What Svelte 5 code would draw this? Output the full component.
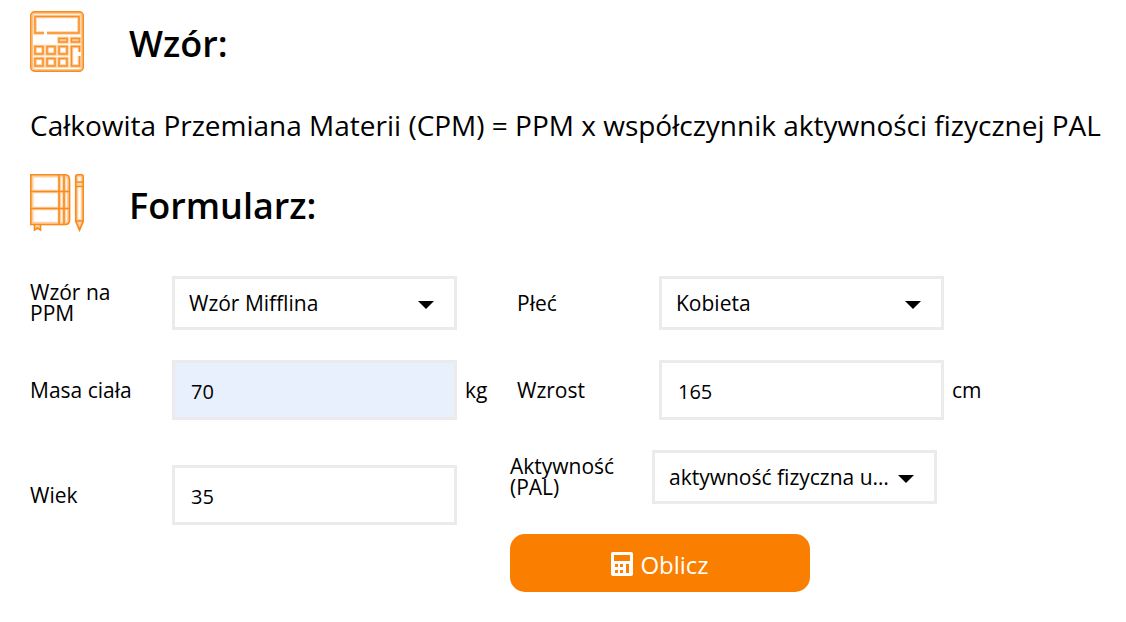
<script lang="ts">
  type Option = {
    value: string;
    label: string;
  };

  const formulas: Option[] = [
    { value: "mifflin", label: "Wzór Mifflina" },
    { value: "harris", label: "Wzór Harrisa-Benedicta" },
  ];

  const genders: Option[] = [
    { value: "female", label: "Kobieta" },
    { value: "male", label: "Mężczyzna" },
  ];

  const activities: Option[] = [
    { value: "1.7", label: "aktywność fizyczna umiarkowana" },
    { value: "1.4", label: "aktywność fizyczna niska" },
    { value: "2.0", label: "aktywność fizyczna wysoka" },
  ];

  let formula = "mifflin";
  let gender = "female";
  let activity = "1.7";
  let weight = "70";
  let height = "165";
  let age = "35";
  let total = 0;

  function calculate() {
    const w = Number(weight);
    const h = Number(height);
    const a = Number(age);
    const female = gender === "female";
    let ppm = 10 * w + 6.25 * h - 5 * a + (female ? -161 : 5);
    if (formula === "harris") {
      ppm = female
        ? 655.1 + 9.563 * w + 1.85 * h - 4.676 * a
        : 66.5 + 13.75 * w + 5.003 * h - 6.775 * a;
    }
    total = Math.round(ppm * Number(activity));
  }
</script>

<main data-total={total || undefined}>
  <header>
    <svg class="icon" viewBox="0 0 54 62" aria-hidden="true">
      <rect x="1.5" y="2.5" width="51" height="58" rx="4" fill="none" stroke="#fcc48a" stroke-width="3" />
      <rect x="0.7" y="1.7" width="52.6" height="59.6" rx="4" fill="none" stroke="#f98a1c" stroke-width="1.4" />
      <g fill="none" stroke="#fdd0a2" stroke-width="3.6">
        <path d="M14 23H5V6.500H49V23H17M29 28.500h8v3.500h-8zM41.500 28.500h8v3.500h-8zM5 36.500h8v7.500h-8zM17 36.500h8v7.500h-8zM29 36.500h8v7.500h-8zM5 48.500h8v7.500h-8zM17 48.500h8v7.500h-8zM29 48.500h8v7.500h-8zM49.500 42v-5.500h-8V56h8V46" />
      </g>
      <g fill="none" stroke="#f98e25" stroke-width="1.5">
        <path d="M14 23H5V6.500H49V23H17M29 28.500h8v3.500h-8zM41.500 28.500h8v3.500h-8zM5 36.500h8v7.500h-8zM17 36.500h8v7.500h-8zM29 36.500h8v7.500h-8zM5 48.500h8v7.500h-8zM17 48.500h8v7.500h-8zM29 48.500h8v7.500h-8zM49.500 42v-5.500h-8V56h8V46" />
      </g>
    </svg>
    <h2>Wzór:</h2>
  </header>

  <p>Całkowita Przemiana Materii (CPM) = PPM x współczynnik aktywności fizycznej PAL</p>

  <header>
    <svg class="icon" viewBox="0 0 54 62" aria-hidden="true">
      <g fill="none" stroke="#fdd0a2" stroke-width="3.6">
        <path d="M1.800 3.800H35Q38.500 3.800 38.500 8V48Q38.500 51.500 35 51.500H1.800zM1 19.500H39M1 36.500H39M29.500 3v49M34 3v49" />
        <path d="M46.500 5Q46.500 3.500 48.500 3.500H51Q52.500 3.500 52.500 5V49H46.500zM46 12h7M46.500 49l3 7 3-7M5 56l5-1" />
      </g>
      <g fill="none" stroke="#f98a1c" stroke-width="1.600">
        <path d="M0.800 2.800H35Q39.500 2.800 39.500 8V48Q39.500 52.500 35 52.500H0.800zM1 19.500H39M1 36.500H39M29 3v50M34 3v50" />
        <path d="M45.800 5Q45.800 2.800 48 2.800H51Q53.200 2.800 53.200 5V49L49.500 58 45.800 49zM46 10h7M46 14.500h7M46 49h7M4.500 53v5l3-2 3 2v-5" />
      </g>
      <path fill="#f98a1c" d="M48 55h3l-1.500 4z" />
    </svg>
    <h2>Formularz:</h2>
  </header>

  <form on:submit|preventDefault={calculate}>
    <div class="column">
      <div class="field">
        <label for="formula">Wzór na PPM</label>
        <div class="select">
          <select id="formula" bind:value={formula}>
            {#each formulas as option (option.value)}
              <option value={option.value}>{option.label}</option>
            {/each}
          </select>
          <svg viewBox="0 0 16 8" aria-hidden="true"><path d="M0 0h16L8 8z" /></svg>
        </div>
      </div>
      <div class="field">
        <label for="weight">Masa ciała</label>
        <input class="filled" id="weight" type="text" inputmode="numeric" bind:value={weight} />
        <span>kg</span>
      </div>
      <div class="field age">
        <label for="age">Wiek</label>
        <input id="age" type="text" inputmode="numeric" bind:value={age} />
      </div>
    </div>

    <div class="column">
      <div class="field inset">
        <label for="gender">Płeć</label>
        <div class="select">
          <select id="gender" bind:value={gender}>
            {#each genders as option (option.value)}
              <option value={option.value}>{option.label}</option>
            {/each}
          </select>
          <svg viewBox="0 0 16 8" aria-hidden="true"><path d="M0 0h16L8 8z" /></svg>
        </div>
      </div>
      <div class="field inset">
        <label for="height">Wzrost</label>
        <input id="height" type="text" inputmode="numeric" bind:value={height} />
        <span>cm</span>
      </div>
      <div class="field">
        <label for="activity">Aktywność (PAL)</label>
        <div class="select">
          <select id="activity" bind:value={activity}>
            {#each activities as option (option.value)}
              <option value={option.value}>{option.label}</option>
            {/each}
          </select>
          <svg viewBox="0 0 16 8" aria-hidden="true"><path d="M0 0h16L8 8z" /></svg>
        </div>
      </div>
      <button type="submit">
        <svg viewBox="0 0 22 24" aria-hidden="true">
          <path
            fill="#fff"
            fill-rule="evenodd"
            d="M2 0H20Q22 0 22 2V22Q22 24 20 24H2Q0 24 0 22V2Q0 0 2 0zM3 3V9H19V3zM4 12V15H7V12zM9 12V15H12V12zM15 12V21H18V12zM4 18V21H7V18zM9 18V21H12V18z"
          />
        </svg>
        Oblicz
      </button>
    </div>
  </form>
</main>

<style>
  :global(body) {
    margin: 0;
    background: #fff;
  }

  main {
    padding: 10px 20px 30px 30px;
    color: #000;
    font-family: "Open Sans", "Noto Sans", sans-serif;
    font-size: 21px;
  }

  header {
    display: flex;
    align-items: center;
    gap: 45px;
  }

  .icon {
    width: 54px;
    height: 62px;
  }

  h2 {
    margin: 0;
    padding-top: 6px;
    font-size: 36px;
    font-weight: 600;
    line-height: 56px;
  }

  p {
    margin: 32px 0 26px;
    font-size: 28px;
    line-height: 42px;
  }

  form {
    display: grid;
    grid-template-columns: minmax(0, 480px) minmax(0, 1fr);
    margin-top: 42px;
  }

  .column {
    display: flex;
    flex-direction: column;
    gap: 30px;
  }

  .field {
    display: flex;
    align-items: center;
  }

  .inset {
    padding-left: 7px;
  }

  .age {
    margin-top: 15px;
  }

  label {
    flex: 0 0 112px;
    margin-right: 30px;
    line-height: 21px;
  }

  .select {
    position: relative;
  }

  .select,
  input {
    flex: 0 1 285px;
    min-width: 0;
  }

  select,
  input {
    box-sizing: border-box;
    width: 100%;
    margin: 0;
    border: 3px solid #ebebeb;
    border-radius: 0;
    background: #fff;
    color: #000;
    font: inherit;
  }

  select {
    display: block;
    height: 54px;
    padding: 0 36px 0 14px;
    appearance: none;
    text-overflow: ellipsis;
  }

  input {
    height: 60px;
    padding: 3px 16px 0;
    font-size: 20px;
  }

  .filled {
    background: #e8f0fe;
  }

  .select svg {
    position: absolute;
    top: 25px;
    right: 23px;
    width: 16px;
    height: 8px;
    pointer-events: none;
  }

  .field span {
    margin-left: 8px;
  }

  button {
    display: flex;
    align-items: center;
    justify-content: center;
    gap: 7px;
    width: 300px;
    max-width: 100%;
    height: 58px;
    padding: 2px 0 0;
    border: 0;
    border-radius: 15px;
    background: #fa7f00;
    color: #fff;
    font: inherit;
    font-size: 24px;
    cursor: pointer;
  }

  button svg {
    width: 22px;
    height: 24px;
  }
</style>
